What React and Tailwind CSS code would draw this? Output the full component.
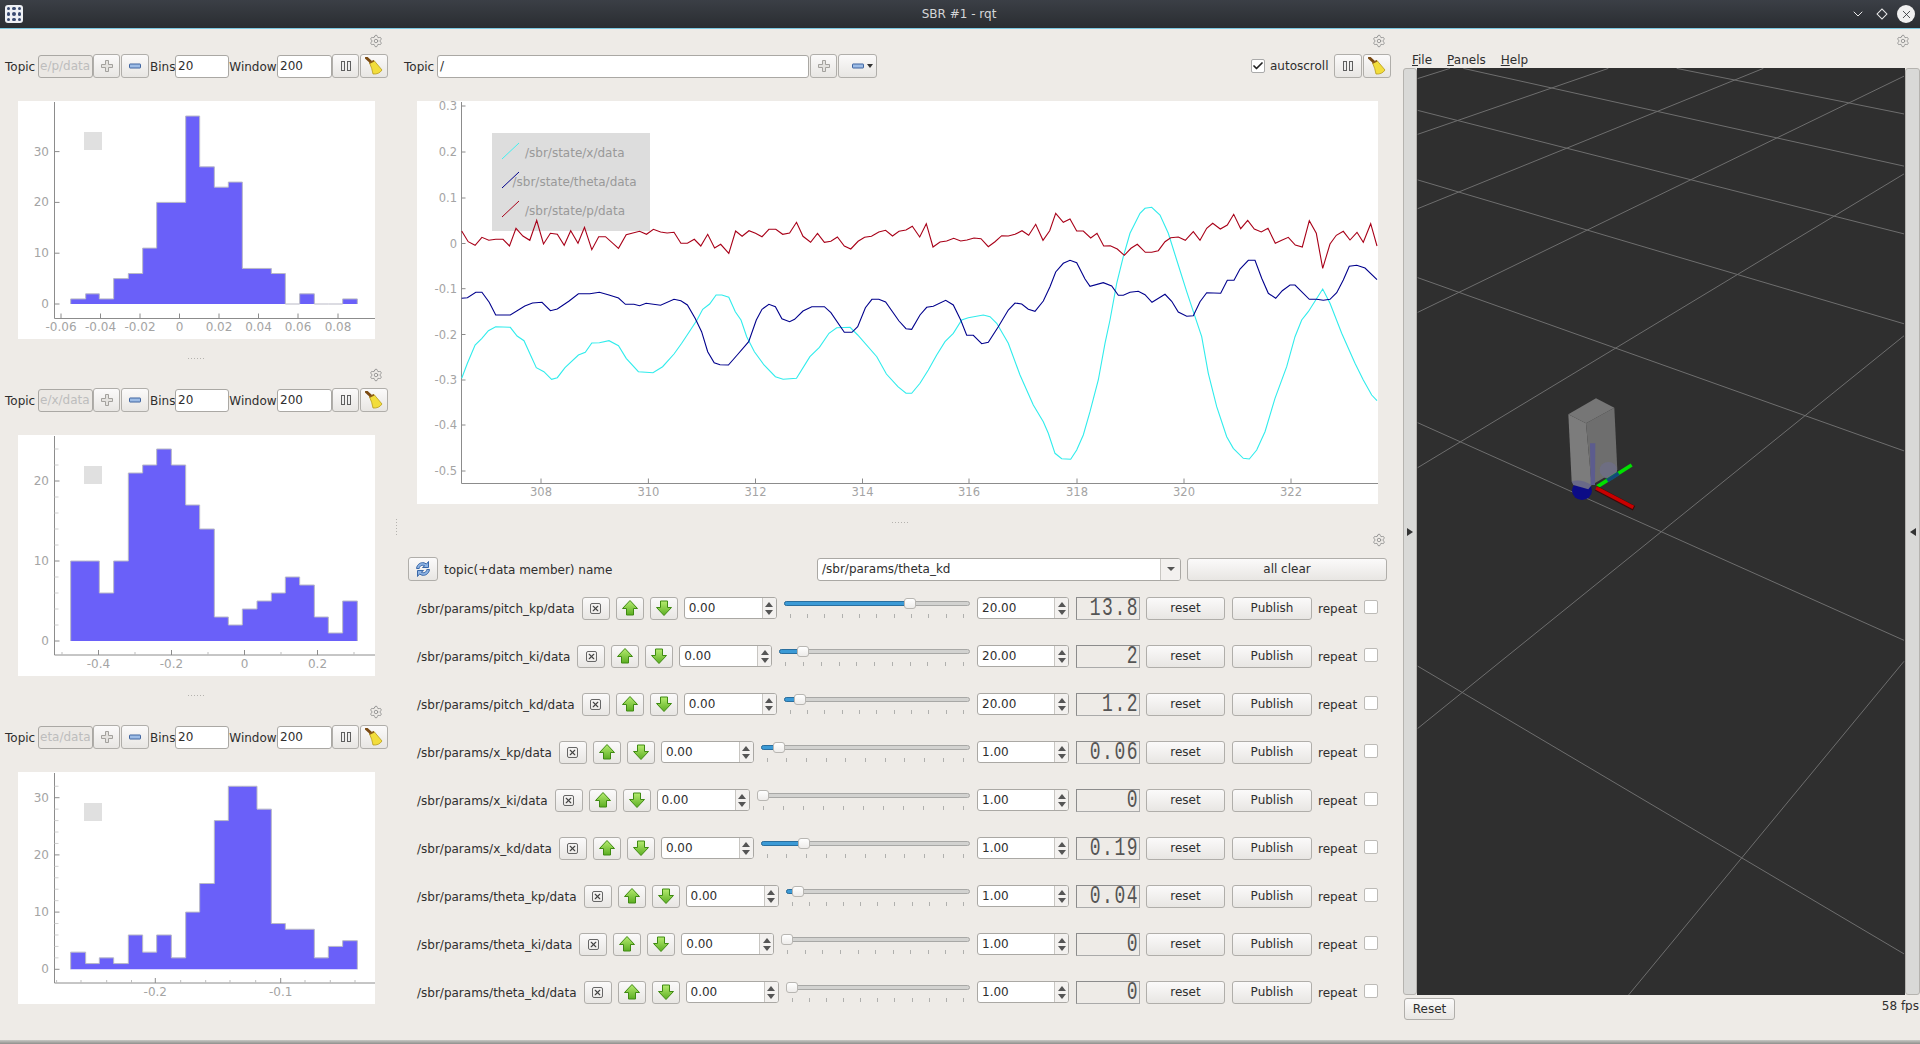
import { Check, ChevronDown, Settings, X } from "lucide-react";

// pixel positions below are screen coordinates, read off the screenshot
const binEdges = [212, 257, 298, 341, 385, 428, 470, 514, 557, 599, 643, 685, 727, 771, 814, 856, 899, 943, 985, 1028, 1072].map((v) => v / 3);

const hists = [
  {
    topic: "e/p/data", top: 101, height: 238, axisY: 318.5, zero: 304, perCount: 5.08, squareY: 132,
    counts: [1, 2, 1, 5, 6, 11, 20, 20, 37, 27, 23, 24, 7, 7, 6, 0, 2, 0, 0, 1],
    yTicks: [[0, "0"], [10, "10"], [20, "20"], [30, "30"]], minorY: [],
    xTicks: [[61, "-0.06"], [100.5, "-0.04"], [140, "-0.02"], [179.5, "0"], [219, "0.02"], [258.5, "0.04"], [298, "0.06"], [338, "0.08"]],
    minorX: [],
  },
  {
    topic: "e/x/data", top: 435, height: 241, axisY: 655, zero: 641, perCount: 8, squareY: 466,
    counts: [10, 10, 6, 10, 21, 22, 24, 22, 17, 14, 3, 2, 4, 5, 6, 8, 7, 3, 1, 5],
    yTicks: [[0, "0"], [10, "10"], [20, "20"]], minorY: [2, 4, 6, 8, 12, 14, 16, 18, 22, 24],
    xTicks: [[98.5, "-0.4"], [171.5, "-0.2"], [244.5, "0"], [317.5, "0.2"]],
    minorX: [62, 135, 208, 281, 354],
  },
  {
    topic: "eta/data", top: 772, height: 232, axisY: 983, zero: 969.3, perCount: 5.72, squareY: 803,
    counts: [3, 1, 2, 1, 6, 3, 6, 2, 10, 15, 26, 32, 32, 28, 8, 7, 7, 2, 4, 5],
    yTicks: [[0, "0"], [10, "10"], [20, "20"], [30, "30"]], minorY: [2, 4, 6, 8, 12, 14, 16, 18, 22, 24, 26, 28, 32],
    xTicks: [[155.3, "-0.2"], [280.7, "-0.1"]],
    minorX: [56.6, 81, 106.7, 131.5, 180.7, 205.7, 230, 255.7, 305, 330.3, 355],
  },
];

// curve points traced in two crops, converted to screen coordinates
const fromA = (pts) => pts.map(([x, y]) => [410 + x / 2.6133, 100 + y / 3]);
const fromB = (pts) => pts.map(([x, y]) => [900 + x / 3, 100 + y / 3]);
const toPoints = (pts) => pts.map(([x, y]) => `${x.toFixed(1)},${y.toFixed(1)}`).join(" ");

const redLine = [
  ...fromA([[135,393],[152,425],[170,436],[188,412],[206,421],[224,418],[243,418],[260,438],[277,385],[295,408],[313,421],[331,361],[349,432],[367,400],[385,403],[403,436],[420,392],[439,430],[456,382],[475,449],[493,410],[511,410],[545,445],[565,404],[580,400],[600,394],[618,403],[636,388],[655,396],[672,399],[690,397],[708,430],[725,430],[743,418],[760,438],[778,403],[796,444],[812,433],[833,460],[851,393],[868,409],[886,392],[903,400],[920,410],[938,388],[956,388],[974,403],[992,399],[1010,367],[1027,409],[1047,427],[1065,400],[1083,427],[1100,424],[1117,411],[1135,438],[1152,447],[1171,424],[1188,412],[1206,409],[1225,396],[1243,391],[1261,408],[1278,394]]),
  ...fromB([[18,390],[37,379],[59,411],[79,371],[99,441],[120,426],[140,423],[161,415],[182,423],[201,420],[222,414],[243,416],[265,440],[285,425],[305,407],[325,408],[345,403],[366,392],[386,406],[407,373],[429,421],[449,392],[467,340],[490,367],[510,357],[530,393],[550,393],[572,414],[591,400],[611,438],[631,437],[652,447],[673,466],[693,445],[712,433],[736,457],[755,457],[775,452],[795,425],[812,413],[835,411],[856,421],[880,395],[900,421],[920,385],[938,370],[961,387],[982,375],[1001,343],[1022,386],[1043,361],[1063,387],[1084,396],[1104,385],[1126,430],[1145,421],[1165,412],[1186,435],[1207,441],[1228,362],[1249,400],[1268,505],[1290,432],[1309,406],[1330,394],[1350,420],[1371,397],[1390,427],[1412,371],[1431,438]]),
];

const blueLine = [
  ...fromA([[135,595],[150,593],[172,577],[188,577],[207,607],[224,645],[262,645],[300,618],[320,609],[345,607],[367,632],[385,627],[415,604],[440,581],[470,581],[495,577],[520,585],[545,594],[563,613],[585,613],[600,617],[617,610],[655,616],[690,598],[708,602],[725,615],[745,655],[762,695],[778,755],[795,788],[810,794],[832,795],[855,765],[885,725],[905,660],[920,628],[938,613],[955,620],[972,656],[992,665],[1005,658],[1027,633],[1050,620],[1083,620],[1100,638],[1135,697],[1155,697],[1170,680],[1190,623],[1207,598],[1225,598],[1243,606],[1278,663]]),
  ...fromB([[18,686],[35,688],[60,645],[80,622],[100,619],[137,601],[160,615],[182,660],[200,706],[220,706],[245,731],[265,727],[295,680],[325,630],[345,609],[365,612],[385,628],[405,634],[430,603],[450,560],[467,516],[490,490],[510,481],[530,488],[555,537],[570,559],[610,548],[635,558],[655,586],[670,586],[690,577],[715,574],[735,584],[756,607],[795,583],[815,604],[835,636],[860,649],[880,647],[900,605],[920,578],[962,580],[982,541],[1002,541],[1020,507],[1045,481],[1065,481],[1085,535],[1105,580],[1127,595],[1147,572],[1170,555],[1185,555],[1228,598],[1250,598],[1270,601],[1290,598],[1310,578],[1330,540],[1348,499],[1370,496],[1395,504],[1431,539]]),
];

const cyanLine = [
  ...fromA([[135,835],[150,790],[170,735],[188,715],[205,692],[224,680],[262,682],[280,708],[298,722],[315,765],[330,803],[350,815],[370,838],[385,833],[405,803],[440,765],[458,757],[475,729],[495,728],[520,722],[545,737],[565,775],[597,815],[635,818],[660,800],[690,762],[710,730],[730,695],[750,660],[765,628],[783,612],[800,585],[815,585],[833,592],[850,635],[865,660],[880,710],[900,755],[925,795],[955,830],[975,838],[1010,835],[1045,770],[1070,742],[1095,700],[1115,683],[1150,682],[1170,705],[1220,770],[1245,822],[1275,860]]),
  ...fromB([[18,880],[35,880],[60,850],[85,810],[110,765],[135,725],[160,700],[185,660],[205,653],[250,645],[270,650],[290,670],[325,730],[360,825],[400,915],[430,965],[445,1000],[465,1060],[485,1076],[512,1078],[530,1050],[550,1005],[570,935],[595,840],[615,730],[630,660],[650,550],[670,470],[690,400],[720,340],[735,325],[755,322],[780,345],[805,400],[830,480],[860,575],[885,650],[905,710],[925,820],[950,920],[980,1010],[1000,1045],[1030,1075],[1048,1077],[1070,1050],[1095,995],[1125,895],[1160,800],[1185,710],[1205,660],[1225,635],[1268,567],[1290,610],[1325,700],[1365,790],[1390,840],[1415,885],[1431,902]]),
];

const yLabels = [[106, "0.3"], [152, "0.2"], [198, "0.1"], [243.5, "0"], [288.7, "-0.1"], [334.5, "-0.2"], [380, "-0.3"], [425, "-0.4"], [471, "-0.5"]];
const xLabels = [[541, "308"], [648.4, "310"], [755.5, "312"], [862.5, "314"], [969, "316"], [1077, "318"], [1184, "320"], [1291, "322"]];

const gridLines = [
  [[190,14],[1512,177]], [[830,14],[1512,90]], [[53,84],[1512,290]], [[53,200],[1512,440]], [[53,363],[1512,652]], [[53,605],[1512,968]], [[53,1011],[1512,1491]],
  [[53,31],[150,14]], [[53,124],[625,14]], [[53,248],[1090,14]], [[53,421],[1512,27]], [[53,680],[1512,190]], [[53,1115],[1512,460]], [[685,1560],[1512,1003]],
];

const paramRows = [
  { name: "/sbr/params/pitch_kp/data", max: "20.00", lcd: "13.8", f: 0.69 },
  { name: "/sbr/params/pitch_ki/data", max: "20.00", lcd: "2", f: 0.1 },
  { name: "/sbr/params/pitch_kd/data", max: "20.00", lcd: "1.2", f: 0.06 },
  { name: "/sbr/params/x_kp/data", max: "1.00", lcd: "0.06", f: 0.06 },
  { name: "/sbr/params/x_ki/data", max: "1.00", lcd: "0", f: 0 },
  { name: "/sbr/params/x_kd/data", max: "1.00", lcd: "0.19", f: 0.19 },
  { name: "/sbr/params/theta_kp/data", max: "1.00", lcd: "0.04", f: 0.04 },
  { name: "/sbr/params/theta_ki/data", max: "1.00", lcd: "0", f: 0 },
  { name: "/sbr/params/theta_kd/data", max: "1.00", lcd: "0", f: 0 },
];

const btn = "flex items-center justify-center shrink-0 rounded-[3px] border border-[#b0aeaa] bg-linear-to-b from-[#fbfafa] to-[#e8e6e3] text-[#2e2e2e]";
const field = "shrink-0 rounded-[3px] border border-[#aaa8a4] bg-white text-[#2e2e2e]";

function Gear() {
  return <Settings className="w-[14px] h-[14px] text-[#8a8a8a]" strokeWidth={1.4} />;
}

function PlusIcon() {
  return (
    <svg width="14" height="14" viewBox="0 0 14 14">
      <path d="M5.5 1.5h3v4h4v3h-4v4h-3v-4h-4v-3h4z" fill="#e4e2df" stroke="#a3a19d" />
    </svg>
  );
}

function MinusIcon() {
  return (
    <svg width="14" height="8" viewBox="0 0 14 8">
      <rect x="1.5" y="2" width="11" height="4" rx="0.5" fill="#9dbce6" stroke="#3f64a0" />
    </svg>
  );
}

function PauseIcon() {
  return (
    <svg width="12" height="12" viewBox="0 0 12 12">
      <rect x="1.5" y="1.5" width="3" height="9" fill="#eeeeee" stroke="#5f5f5f" />
      <rect x="7.5" y="1.5" width="3" height="9" fill="#eeeeee" stroke="#5f5f5f" />
    </svg>
  );
}

function BroomIcon() {
  return (
    <svg width="18" height="18" viewBox="0 0 18 18">
      <path d="M1.5 1 L6.5 5.5" stroke="#7a4a12" strokeWidth="3" strokeLinecap="round" />
      <path d="M4.5 6 L9 3.5 L17 13 Q14 17.5 8 17 Q7 11 4.5 6 Z" fill="#f2dd3c" stroke="#b89c1c" strokeWidth="0.8" />
      <path d="M4.5 6 L9 3.8" stroke="#8a5a1a" strokeWidth="1.6" />
    </svg>
  );
}

function RefreshIcon() {
  return (
    <svg width="18" height="18" viewBox="0 0 18 18">
      <g fill="#8db3e4" stroke="#3a68a8" strokeWidth="1" strokeLinejoin="round">
        <path d="M2.5 8.5 C3 4.5 6.5 2 10 2.8 L12.5 4 L14.5 1.5 V7.5 H8.5 L10.7 5.8 C8 4.5 5.5 5.8 5.2 8.5 Z" />
        <path d="M15.5 9.5 C15 13.5 11.5 16 8 15.2 L5.5 14 L3.5 16.5 V10.5 H9.5 L7.3 12.2 C10 13.5 12.5 12.2 12.8 9.5 Z" />
      </g>
    </svg>
  );
}

function ArrowIcon({ down }) {
  return (
    <svg width="18" height="18" viewBox="0 0 18 18" className={down ? "rotate-180" : ""}>
      <defs>
        <linearGradient id={down ? "arrowDown" : "arrowUp"} x1="0" y1="0" x2="0" y2="1">
          <stop offset="0" stopColor={down ? "#5cae22" : "#b6ec70"} />
          <stop offset="1" stopColor={down ? "#b6ec70" : "#5cae22"} />
        </linearGradient>
      </defs>
      <path d="M9 1.5 L16.5 9.5 H12.5 V16 H5.5 V9.5 H1.5 Z" fill={`url(#${down ? "arrowDown" : "arrowUp"})`} stroke="#3f8a12" />
    </svg>
  );
}

function ToolButtons({ topic }) {
  return (
    <div className="flex items-center h-[24px] mt-[1px] pl-[5px]">
      <span className="w-[33px] shrink-0 pt-[1px]">Topic</span>
      <div className="w-[55px] h-[23px] shrink-0 overflow-hidden rounded-[3px] border border-[#aaa8a4] bg-[#ebe8e4] pl-[1px] leading-[20px] text-[#bdbdbd]">{topic}</div>
      <div className={`${btn} w-[27px] h-[24px]`}><PlusIcon /></div>
      <div className={`${btn} w-[28px] h-[24px] ml-[1px]`}><MinusIcon /></div>
      <span className="w-[26px] shrink-0 pl-[1px] pt-[1px]">Bins</span>
      <div className={`${field} w-[54px] h-[23px] pl-[2px] leading-[20px]`}>20</div>
      <span className="w-[48px] shrink-0 text-center pt-[1px]">Window</span>
      <div className={`${field} w-[55px] h-[23px] pl-[2px] leading-[20px]`}>200</div>
      <div className={`${btn} w-[27px] h-[24px]`}><PauseIcon /></div>
      <div className={`${btn} w-[28px] h-[24px] ml-[1px]`}><BroomIcon /></div>
    </div>
  );
}

function Histogram({ h }) {
  const barY = (c) => h.zero - c * h.perCount;
  let outline = `M${binEdges[0]} ${h.zero}`;
  h.counts.forEach((c, i) => {
    outline += `L${binEdges[i]} ${barY(c)}L${binEdges[i + 1]} ${barY(c)}`;
  });
  outline += `L${binEdges[20]} ${h.zero}`;

  return (
    <svg className="block ml-[18px] mt-[23px] bg-white" width="357" height={h.height} viewBox={`18 ${h.top} 357 ${h.height}`}>
      <rect x="84" y={h.squareY} width="18" height="18" fill="#e0e0e0" />
      <path d={outline + "Z"} fill="#6a60f9" stroke="none" />
      <path d={outline} fill="none" stroke="#b9b9c6" />
      <path d={`M54.5 ${h.top + 1}V${h.axisY}H375`} fill="none" stroke="#8c8c8c" />
      {h.yTicks.map(([v, label]) => (
        <g key={label}>
          <path d={`M54.5 ${barY(v)}h5`} stroke="#8c8c8c" />
          <text x="49" y={barY(v) + 4} textAnchor="end" className="text-[12px] fill-[#a4a4a4]">{label}</text>
        </g>
      ))}
      {h.minorY.map((v) => (
        <path key={v} d={`M54.5 ${barY(v)}h4`} stroke="#cfcfcf" />
      ))}
      {h.xTicks.map(([x, label]) => (
        <g key={label}>
          <path d={`M${x} ${h.axisY}v-5`} stroke="#8c8c8c" />
          <text x={x} y={h.axisY + 12.5} textAnchor="middle" className="text-[12px] fill-[#a4a4a4]">{label}</text>
        </g>
      ))}
      {h.minorX.map((x) => (
        <path key={x} d={`M${x} ${h.axisY}v-3`} stroke="#bdbdbd" />
      ))}
    </svg>
  );
}

function HistPanel({ h }) {
  return (
    <div>
      <div className="flex h-[24px] items-center justify-end pr-[11px]"><Gear /></div>
      <ToolButtons topic={h.topic} />
      <Histogram h={h} />
    </div>
  );
}

function HDots() {
  return (
    <div className="flex gap-[2px]">
      {[0, 1, 2, 3, 4, 5].map((i) => (
        <div key={i} className="w-[1px] h-[1px] bg-[#b5b3af]" />
      ))}
    </div>
  );
}

function LinePlot() {
  return (
    <svg className="block ml-[17px] mt-[23px] bg-white" width="961" height="403" viewBox="417 101 961 403">
      <rect x="492" y="133" width="158" height="98" fill="#dddddd" />
      <path d="M502 159L519 143" stroke="#40f0f0" />
      <path d="M502 188L519 172" stroke="#00008c" />
      <path d="M502 217L519 201" stroke="#a80018" />
      <text x="525" y="156.5" className="text-[12px] fill-[#999999]">/sbr/state/x/data</text>
      <text x="512.5" y="185.5" className="text-[12px] fill-[#999999]">/sbr/state/theta/data</text>
      <text x="525" y="214.5" className="text-[12px] fill-[#999999]">/sbr/state/p/data</text>
      <path d="M461.5 102V483.5H1378" fill="none" stroke="#8c8c8c" />
      {yLabels.map(([y, label]) => (
        <g key={label}>
          <path d={`M461.5 ${y}h4`} stroke="#8c8c8c" />
          <text x="457" y={y + 4} textAnchor="end" className="text-[11.5px] fill-[#a4a4a4]">{label}</text>
        </g>
      ))}
      {xLabels.map(([x, label]) => (
        <g key={label}>
          <path d={`M${x} 483.5v-5`} stroke="#8c8c8c" />
          <text x={x} y="496" textAnchor="middle" className="text-[11.5px] fill-[#a4a4a4]">{label}</text>
        </g>
      ))}
      <polyline points={toPoints(cyanLine)} fill="none" stroke="#30ecec" strokeWidth="1.1" />
      <polyline points={toPoints(blueLine)} fill="none" stroke="#00008c" strokeWidth="1.1" />
      <polyline points={toPoints(redLine)} fill="none" stroke="#a80018" strokeWidth="1.1" />
    </svg>
  );
}

function SpinBox({ value, width }) {
  return (
    <div className={`${field} ${width} h-[22px] flex overflow-hidden`}>
      <span className="flex-1 pl-[4px] leading-[21px]">{value}</span>
      <div className="w-[14px] flex flex-col items-center justify-center gap-[3px] border-l border-[#c8c6c2] bg-[#f3f1ef]">
        <div className="w-0 h-0 border-x-[4px] border-x-transparent border-b-[5px] border-b-[#555]" />
        <div className="w-0 h-0 border-x-[4px] border-x-transparent border-t-[5px] border-t-[#555]" />
      </div>
    </div>
  );
}

function Slider({ f }) {
  return (
    <div className="flex-1 min-w-0 ml-[1px] flex flex-col mb-[1px]">
      <div className="relative h-[11px]">
        <div className="absolute inset-x-0 top-[3px] h-[5px] rounded-full border border-[#a8a8a6] bg-[#d2d2d0]" />
        <div
          className="absolute left-0 top-[3px] h-[5px] rounded-full border border-[#2a6f9f] bg-[#3b9ad6]"
          style={{ width: `calc(${f} * (100% - 12px) + 6px)` }}
        />
        <div
          className="absolute top-0 w-[12px] h-[11px] rounded-[3px] border border-[#b8b6b2] bg-linear-to-b from-white to-[#eeecea]"
          style={{ left: `calc(${f} * (100% - 12px))` }}
        />
      </div>
      <div className="flex justify-between px-[6px] mt-[5px]">
        {[0, 1, 2, 3, 4, 5, 6, 7, 8, 9, 10].map((i) => (
          <div key={i} className="w-[1px] h-[4px] bg-[#b0b0ae]" />
        ))}
      </div>
    </div>
  );
}

function ParamRow({ row }) {
  return (
    <div className="flex h-[48px] items-center gap-[6px] pl-[17px] pr-[22px]">
      <span className="shrink-0 mr-[1px] pt-[1px]">{row.name}</span>
      <div className={`${btn} w-[28px] h-[23px]`}>
        <div className="w-[11px] h-[11px] rounded-[2px] border border-[#666] flex items-center justify-center">
          <X className="w-[9px] h-[9px] text-[#444]" strokeWidth={3} />
        </div>
      </div>
      <div className={`${btn} w-[28px] h-[23px]`}><ArrowIcon /></div>
      <div className={`${btn} w-[28px] h-[23px]`}><ArrowIcon down /></div>
      <SpinBox value="0.00" width="w-[93px]" />
      <Slider f={row.f} />
      <div className="ml-[1px]"><SpinBox value={row.max} width="w-[92px]" /></div>
      <div className="ml-[1px] w-[64px] h-[23px] shrink-0 border border-[#aaa] border-t-[#8c8c8c] border-l-[#8c8c8c] text-right">
        <span className="inline-block font-['Liberation_Mono',monospace] text-[18px] leading-[21px] tracking-[1.5px] text-[#555] scale-y-[1.4]">{row.lcd}</span>
      </div>
      <div className={`${btn} w-[79px] h-[23px]`}>reset</div>
      <div className={`${btn} w-[80px] h-[23px] ml-[1px]`}>Publish</div>
      <span className="w-[39px] shrink-0 pt-[1px]">repeat</span>
      <div className="ml-[1px] mb-[2px] w-[14px] h-[14px] shrink-0 rounded-[2px] border border-[#bdbbb7] bg-white" />
    </div>
  );
}

function Viewport() {
  const gx = (x) => 1400 + x / 3;
  const gy = (y) => 60 + y / 1.668;
  return (
    <svg className="block flex-1 min-w-0" height="927" viewBox="1417 68 488 927" preserveAspectRatio="none">
      <rect x="1417" y="68" width="488" height="927" fill="#2f2f2f" />
      {gridLines.map(([a, b], i) => (
        <line key={i} x1={gx(a[0])} y1={gy(a[1])} x2={gx(b[0])} y2={gy(b[1])} stroke="#6e6e6e" strokeWidth="1" />
      ))}
      {/* robot and axes, traced from a 3x crop at 1520,370 */}
      <g transform="translate(1520 370) scale(0.3333)">
        <ellipse cx="265" cy="300" rx="26" ry="26" fill="#5a5f78" />
        <ellipse cx="186" cy="362" rx="30" ry="28" fill="#0c0c86" />
        <path d="M145 133L198 160L215 345L155 335Z" fill="#7c7c7c" />
        <path d="M198 160L283 113L292 300L215 345Z" fill="#6e6e6e" />
        <path d="M145 133L228 85L283 113L198 160Z" fill="#767676" />
        <path d="M210 220H226L225 345H212Z" fill="#5c5c8e" />
        <ellipse cx="265" cy="300" rx="26" ry="24" fill="#6e6e82" />
        <path d="M155 335Q180 325 215 345L205 358L160 345Z" fill="#6a6a88" />
        <path d="M232 350L335 285" stroke="#00e000" strokeWidth="11" />
        <path d="M262 332L296 310" stroke="#134a7a" strokeWidth="12" />
        <path d="M228 355L342 415" stroke="#3a0a0a" strokeWidth="15" />
        <path d="M228 354L340 412" stroke="#c80000" strokeWidth="11" />
      </g>
    </svg>
  );
}

function SideStrip({ left }) {
  return (
    <div className="shrink-0 flex items-center justify-center rounded-[3px] border border-[#b5b3af] bg-[#d9d9d7] h-[927px] w-full">
      <div className={`w-0 h-0 border-y-[4px] border-y-transparent ${left ? "border-r-[6px] border-r-[#333]" : "border-l-[6px] border-l-[#333]"}`} />
    </div>
  );
}

export default function App() {
  return (
    <div className="flex h-[1044px] w-[1920px] flex-col overflow-hidden bg-[#eeebe7] font-['DejaVu_Sans',sans-serif] text-[12px] text-[#2e2e2e]">
      {/* Window title bar */}
      <div className="flex h-[29px] shrink-0 items-center border-b border-[#7cc8e0] bg-linear-to-b from-[#3b3f46] to-[#2a2d31] pl-[5px] pr-[5px]">
        <div className="grid h-[18px] w-[18px] grid-cols-3 gap-[2px] rounded-[3px] bg-[#eef0f4] p-[2px]">
          {[0, 1, 2, 3, 4, 5, 6, 7, 8].map((i) => (
            <div key={i} className="rounded-full bg-[#3a4a70]" />
          ))}
        </div>
        <div className="flex-1 pl-[45px] text-center text-[#d5d6d8]">SBR #1 - rqt</div>
        <div className="flex items-center gap-[12px] text-[#e8e8e8]">
          <ChevronDown className="w-[16px] h-[16px]" strokeWidth={1.5} />
          <div className="w-[8px] h-[8px] rotate-45 border border-[#e8e8e8]" />
          <div className="-ml-[1px] flex h-[18px] w-[18px] items-center justify-center rounded-full bg-[#f0f0f0]">
            <X className="w-[13px] h-[13px] text-[#2a2d31]" strokeWidth={1.5} />
          </div>
        </div>
      </div>

      <div className="flex flex-1 min-h-0">
        {/* Histograms */}
        <div className="w-[394px] shrink-0">
          <HistPanel h={hists[0]} />
          <div className="flex h-[24px] items-end justify-center pb-[4px] pr-[2px]"><HDots /></div>
          <HistPanel h={hists[1]} />
          <div className="flex h-[24px] items-end justify-center pb-[4px] pr-[2px]"><HDots /></div>
          <HistPanel h={hists[2]} />
        </div>
        <div className="flex w-[6px] shrink-0 flex-col items-start justify-center gap-[2px] pb-[16px] pl-[2px]">
          {[0, 1, 2, 3, 4, 5].map((i) => (
            <div key={i} className="w-[1px] h-[1px] bg-[#b5b3af]" />
          ))}
        </div>

        {/* Plot and parameter publisher */}
        <div className="w-[1000px] shrink-0">
          <div className="flex h-[24px] items-center justify-end pr-[14px]"><Gear /></div>
          <div className="flex h-[24px] mt-[1px] items-center pl-[4px]">
            <span className="w-[33px] shrink-0 pt-[1px]">Topic</span>
            <div className={`${field} w-[372px] h-[23px] pl-[2px] leading-[20px]`}>/</div>
            <div className={`${btn} w-[27px] h-[24px] ml-[1px]`}><PlusIcon /></div>
            <div className={`${btn} w-[39px] h-[24px] ml-[1px] gap-[2px] pl-[8px]`}>
              <MinusIcon />
              <div className="w-0 h-0 border-x-[3px] border-x-transparent border-t-[4px] border-t-[#333]" />
            </div>
            <div className="ml-auto flex items-center w-[14px] h-[14px] justify-center rounded-[2px] border border-[#aaa] bg-white">
              <Check className="w-[12px] h-[12px] text-[#222]" strokeWidth={3.5} />
            </div>
            <span className="ml-[5px] w-[64px] shrink-0">autoscroll</span>
            <div className={`${btn} w-[28px] h-[24px]`}><PauseIcon /></div>
            <div className={`${btn} w-[28px] h-[24px] ml-[1px] mr-[9px]`}><BroomIcon /></div>
          </div>
          <LinePlot />
          <div className="flex h-[24px] items-start justify-center pt-[18px]"><HDots /></div>
          <div className="flex h-[24px] items-center justify-end pr-[14px]"><Gear /></div>
          <div className="flex h-[24px] mt-[5px] items-center pl-[8px] pr-[13px]">
            <div className={`${btn} w-[30px] h-[24px]`}><RefreshIcon /></div>
            <span className="ml-[6px] pt-[1px]">topic(+data member) name</span>
            <div className={`${field} ml-auto flex w-[364px] h-[23px] overflow-hidden`}>
              <span className="flex-1 pl-[4px] leading-[20px]">/sbr/params/theta_kd</span>
              <div className="flex w-[20px] items-center justify-center border-l border-[#c8c6c2] bg-[#f3f1ef]">
                <div className="w-0 h-0 border-x-[4px] border-x-transparent border-t-[4px] border-t-[#555]" />
              </div>
            </div>
            <div className={`${btn} ml-[6px] w-[200px] h-[23px]`}>all clear</div>
          </div>
          <div className="mt-[3px]">
            {paramRows.map((row) => (
              <ParamRow key={row.name} row={row} />
            ))}
          </div>
        </div>

        {/* 3D view */}
        <div className="min-w-0 flex-1">
          <div className="flex h-[24px] items-center justify-end pr-[10px]"><Gear /></div>
          <div className="flex h-[15px] items-start gap-[15px] pl-[12px] leading-[14px]">
            <span><span className="underline">F</span>ile</span>
            <span><span className="underline">P</span>anels</span>
            <span><span className="underline">H</span>elp</span>
          </div>
          <div className="flex pl-[3px]">
            <div className="w-[14px] shrink-0"><SideStrip /></div>
            <Viewport />
            <div className="w-[15px] shrink-0"><SideStrip left /></div>
          </div>
          <div className="flex items-start pl-[4px] mt-[3px]">
            <div className={`${btn} w-[51px] h-[22px]`}>Reset</div>
            <span className="ml-auto pr-[1px] leading-[16px]">58 fps</span>
          </div>
        </div>
      </div>

      <div className="h-[4px] shrink-0 bg-linear-to-b from-[#c8c8c4] to-[#8f8f8c]" />
    </div>
  );
}
